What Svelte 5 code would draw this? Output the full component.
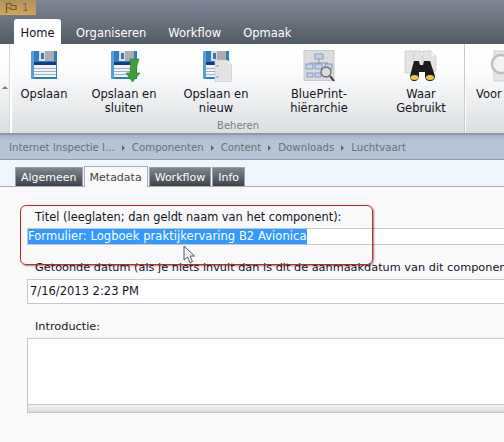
<script>
  const menu = ['Organiseren', 'Workflow', 'Opmaak'];
  const crumbs = ['Internet Inspectie I...', 'Componenten', 'Content', 'Downloads', 'Luchtvaart'];
  const tabs = ['Algemeen', 'Metadata', 'Workflow', 'Info'];
</script>

{#snippet floppy()}
  <path d="M0 2 Q0 0 2 0 H26 V28 H2 Q0 28 0 26 Z" fill="#2f7fc0" />
  <path d="M0 2 Q0 0 2 0 H3 V28 H2 Q0 28 0 26 Z" fill="#5a9fd4" />
  <rect x="8" y="0" width="15" height="10" fill="#a9adb1" />
  <rect x="8" y="0" width="6" height="10" fill="#dfe2e4" />
  <rect x="10" y="2" width="3" height="6" fill="#3b78a8" />
  <rect x="3" y="11" width="22" height="15" fill="#f1f3f6" />
  <rect x="3" y="11" width="22" height="3" fill="#123a86" />
  <rect x="3" y="17" width="22" height="1" fill="#9db0cc" />
  <rect x="3" y="20" width="22" height="1" fill="#9db0cc" />
  <rect x="3" y="23" width="22" height="1" fill="#9db0cc" />
{/snippet}

{#snippet sheet(x, y, w, h)}
  <path d="M{x} {y} H{x + w - 5} L{x + w} {y + 5} V{y + h} H{x} Z" fill="#e4e4e4" stroke="#c4c4c4" stroke-width="0.7" />
  <path d="M{x + w - 5} {y} V{y + 5} H{x + w} Z" fill="#fff" stroke="#c4c4c4" stroke-width="0.5" />
{/snippet}

<div class="page">
  <div class="top">
    <div class="flag">
      <svg width="12" height="12" viewBox="0 0 12 12">
        <path d="M1.500 11V1.500H6V3.500H11V7.500H6V6H1.500" fill="none" stroke="#6d5a2c" stroke-width="1.200" />
      </svg>
      <span>1</span>
    </div>
    <nav class="menu">
      <span class="menu-item active">Home</span>
      {#each menu as item}
        <span class="menu-item">{item}</span>
      {/each}
    </nav>
  </div>

  <div class="ribbon">
    <div class="collapse"><i></i></div>
    <div class="group">
      <div class="buttons">
        <div class="btn b1">
          <svg width="32" height="32" viewBox="0 0 32 32"><g transform="translate(3 1)">{@render floppy()}</g></svg>
          <span>Opslaan</span>
        </div>
        <div class="btn b2">
          <svg width="32" height="32" viewBox="0 0 32 32">
            <g transform="translate(3 1)">{@render floppy()}</g>
            <path d="M22 9 H31 Q28 16 28.500 23 H32 L24.500 32 L18 23 H22 Q23 15 22 9 Z" fill="#3f9d3c" stroke="#2c7a2b" stroke-width="0.6" />
          </svg>
          <span>Opslaan en<br />sluiten</span>
        </div>
        <div class="btn b3">
          <svg width="32" height="32" viewBox="0 0 32 32">
            <g transform="translate(3 1)">{@render floppy()}</g>
            {@render sheet(15, 10, 17, 22)}
            <rect x="16.500" y="15" width="2" height="2" fill="#aaa" />
            <rect x="16.500" y="26" width="2" height="2" fill="#aaa" />
          </svg>
          <span>Opslaan en<br />nieuw</span>
        </div>
        <div class="btn b4">
          <svg width="32" height="32" viewBox="0 0 32 32">
            <rect x="1" y="0.500" width="30" height="30" fill="#dcdcdc" stroke="#c8c8c8" />
            <path d="M16 9V13M7 18V13H25V18M16 13V18" stroke="#8a98b0" fill="none" />
            <rect x="12" y="4" width="8" height="5" fill="#c4d4ee" stroke="#6f84b0" stroke-width="0.7" />
            <rect x="3" y="14" width="7" height="5" fill="#c4d4ee" stroke="#6f84b0" stroke-width="0.7" />
            <rect x="12" y="14" width="7" height="5" fill="#c4d4ee" stroke="#6f84b0" stroke-width="0.7" />
            <rect x="22" y="14" width="7" height="5" fill="#c4d4ee" stroke="#6f84b0" stroke-width="0.7" />
            <rect x="4" y="23" width="6" height="4" fill="#c4d4ee" stroke="#6f84b0" stroke-width="0.7" />
            <rect x="12" y="23" width="6" height="4" fill="#c4d4ee" stroke="#6f84b0" stroke-width="0.7" />
            <circle cx="23" cy="22" r="5" fill="#d8dde2" fill-opacity="0.8" stroke="#6d6d6d" stroke-width="1.300" />
            <path d="M27 26 L31 31" stroke="#333" stroke-width="2" />
          </svg>
          <span>BluePrint-<br />hiërarchie</span>
        </div>
        <div class="btn b5">
          <svg width="34" height="32" viewBox="0 0 34 32">
            {@render sheet(1, 1, 13, 22)}
            {@render sheet(10, 1, 12, 20)}
            {@render sheet(19, 1, 13, 20)}
            <path d="M10 11 H15 L16 15 H19 L20 11 H26 L31 26 Q31 31 26 31 Q21 31 21 26 V22 H15 V26 Q15 31 10 31 Q6 31 6 26 Z" fill="#1c1c1c" />
            <ellipse cx="10.500" cy="27.500" rx="4" ry="2.500" fill="#e8c84a" />
            <ellipse cx="26" cy="27.500" rx="4" ry="2.500" fill="#e8c84a" />
          </svg>
          <span>Waar<br />Gebruikt</span>
        </div>
      </div>
      <div class="group-label">Beheren</div>
    </div>
    <div class="group next">
      <div class="btn b6">
        <svg width="32" height="32" viewBox="0 0 32 32">
          <rect x="5" y="1" width="27" height="30" fill="#e6e6e6" stroke="#cfcfcf" />
          <circle cx="12" cy="14" r="9" fill="#f2f2f2" stroke="#bdbdbd" stroke-width="2.500" />
        </svg>
        <span>Voor</span>
      </div>
    </div>
  </div>

  <div class="crumbs">
    {#each crumbs as crumb, i}
      {#if i > 0}<i class="sep"></i>{/if}
      <span>{crumb}</span>
    {/each}
  </div>

  <div class="tabstrip">
    {#each tabs as tab}
      <span class="tab" class:current={tab === 'Metadata'}>{tab}</span>
    {/each}
  </div>

  <div class="form">
    <label for="titel">Titel (leeglaten; dan geldt naam van het component):</label>
    <div class="field title" id="titel"><span class="selected">Formulier: Logboek praktijkervaring B2 Avionica</span></div>
    <label class="l2" for="datum">Getoonde datum (als je niets invult dan is dit de aanmaakdatum van dit componen</label>
    <div class="field date" id="datum">7/16/2013 2:23 PM</div>
    <label class="l2" for="intro">Introductie:</label>
    <div class="area" id="intro"><div class="scroll"></div></div>

    <div class="callout"></div>
    <svg class="cursor" width="13" height="19" viewBox="0 0 13 19">
      <path d="M1 1 V15 L4.500 12 L7 17.500 L9.500 16.500 L7 11 H11.500 Z" fill="#f4f4f4" fill-opacity="0.85" stroke="#555" stroke-width="1" />
    </svg>
  </div>
</div>

<style>
  :global(body) {
    margin: 0;
    overflow: hidden;
  }

  .page {
    width: 504px;
    height: 442px;
    overflow: hidden;
    background: #f9f9f9;
    font-family: 'DejaVu Sans', Verdana, sans-serif;
    font-size: 11.5px;
    color: #14141e;
    white-space: nowrap;
  }

  .top {
    height: 44px;
    background: linear-gradient(#7f8894, #525a65);
  }

  .flag {
    width: 36px;
    height: 15px;
    display: flex;
    align-items: center;
    gap: 5px;
    padding-left: 5px;
    box-sizing: border-box;
    background: linear-gradient(#b0925f, #d0a65a);
    color: #6d6a5c;
    font-size: 10px;
  }

  .menu {
    display: flex;
    height: 25px;
    margin-top: 4px;
    padding-left: 14px;
  }

  .menu-item {
    padding: 7px 11px 0;
    color: #fff;
    line-height: 14px;
  }

  .menu-item.active {
    width: 47px;
    box-sizing: border-box;
    padding: 7px 0 0;
    margin-right: 4px;
    text-align: center;
    color: #14141e;
    background: #fff;
    border-radius: 3px 3px 0 0;
  }

  .ribbon {
    display: flex;
    height: 89px;
    background: linear-gradient(#fff, #fbfcfc 30%, #dcdfe2);
    border-bottom: 2px solid #8d9aa8;
  }

  .collapse {
    flex: none;
    width: 10px;
    border-right: 2px solid #fff;
    box-shadow: inset -1px 0 0 #d4d7da;
    position: relative;
  }

  .collapse i {
    position: absolute;
    left: 2px;
    top: 42px;
    border: 3px solid transparent;
    border-top: 0;
    border-bottom: 3px solid #777;
  }

  .group {
    flex: none;
    width: 453px;
    box-sizing: border-box;
    border-right: 1px solid #c6cace;
    box-shadow: 1px 0 0 #fff;
    display: flex;
    flex-direction: column;
  }

  .group.next {
    width: 39px;
    border: 0;
    box-shadow: none;
    padding-left: 11px;
  }

  .buttons {
    display: flex;
    flex: 1;
  }

  .btn {
    flex: none;
    display: flex;
    flex-direction: column;
    align-items: center;
    padding-top: 6px;
    text-align: center;
    line-height: 14px;
  }

  .btn span {
    margin-top: 5px;
  }

  .b1 { width: 64px; }
  .b2 { width: 96px; }
  .b3 { width: 88px; }
  .b4 { width: 118px; }
  .b5 { width: 86px; }
  .b6 { align-items: flex-start; }
  .b6 svg { margin-left: 13px; }

  .group-label {
    height: 14px;
    margin-right: 205px;
    text-align: right;
    font-size: 10px;
    line-height: 14px;
    color: #7b8086;
  }

  .crumbs {
    height: 25px;
    padding: 1px 0 0 9px;
    box-sizing: border-box;
    display: flex;
    align-items: center;
    gap: 7px;
    background: linear-gradient(#a4b2c6, #b5c4d6 25%);
    border-bottom: 1px solid #8b98a8;
    color: #6c7076;
    font-size: 10.2px;
  }

  .sep {
    border: 3px solid transparent;
    border-right: 0;
    border-left: 3px solid #5e6670;
  }

  .tabstrip {
    height: 27px;
    display: flex;
    align-items: flex-end;
    gap: 1px;
    padding-left: 15px;
    background: #f0f6fe;
    border-bottom: 1px solid #a6aeb8;
    box-sizing: border-box;
  }

  .tab {
    height: 19px;
    padding: 0 5px;
    line-height: 19px;
    font-size: 11px;
    color: #fff;
    background: linear-gradient(#80868e, #3e444c);
    border: 1px solid #9aa2ac;
    border-bottom: 0;
    box-sizing: border-box;
  }

  .tab.current {
    height: 21px;
    margin-bottom: -1px;
    color: #444;
    background: #f9f9f9;
    border-color: #a6aeb8;
    line-height: 21px;
  }

  .form {
    position: relative;
    padding: 23px 0 0 27px;
  }

  label {
    display: block;
    margin-left: 8px;
    height: 14px;
    line-height: 14px;
    font-size: 11.4px;
    color: #14141e;
  }

  .field {
    margin-top: 4px;
    width: 480px;
    box-sizing: border-box;
    background: #fff;
    border: 1px solid #c2c7d2;
    border-right: 0;
    line-height: 14px;
  }

  .title {
    height: 17px;
  }

  .selected {
    display: inline-block;
    background: #3399ff;
    color: #fff;
    height: 15px;
    line-height: 15px;
    letter-spacing: 0.06px;
  }

  .date {
    height: 25px;
    padding: 4px 0 0 2px;
  }

  .l2 {
    margin-top: 16px;
    font-size: 11.3px;
  }

  .area {
    margin-top: 4px;
    width: 480px;
    height: 75px;
    box-sizing: border-box;
    border: 1px solid #c2c7d2;
    border-right: 0;
    background: #fff;
    display: flex;
    flex-direction: column;
    justify-content: flex-end;
  }

  .scroll {
    height: 7px;
    border-top: 1px solid #c2c7d2;
    background: linear-gradient(#f4f4f4, #dcdcdc);
  }

  .callout {
    position: absolute;
    left: 20px;
    top: 18px;
    width: 351px;
    height: 58px;
    border: 1.500px solid #c8242c;
    border-radius: 6px;
    box-shadow: 1px 1px 2px rgba(0, 0, 0, 0.45);
  }

  .cursor {
    position: absolute;
    left: 183px;
    top: 58px;
  }
</style>
